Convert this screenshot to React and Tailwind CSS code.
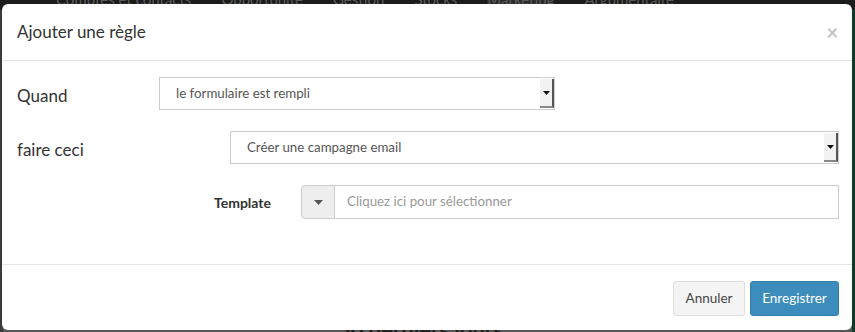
import { useState } from "react"

const font = { fontFamily: '"Source Sans Pro", Lato, "Liberation Sans", sans-serif' }

function Select({ value, className }) {
  return (
    <div className={`flex h-[33px] items-stretch border border-[#ccc] bg-white ${className}`}>
      <div className="flex flex-1 items-center pl-[16px] text-[13.3px] text-[#555]">{value}</div>
      <div className="my-[1px] mr-0 flex w-[14px] items-center justify-center border-r-2 border-b-2 border-r-[#555] border-b-[#888] bg-[#f2f2f2]">
        <svg width="7" height="4" viewBox="0 0 7 4"><path d="M0 0h7L3.5 4z" fill="#111" /></svg>
      </div>
    </div>
  )
}

export default function App() {
  const [template, setTemplate] = useState("")
  const nav = ["Comptes et contacts", "Opportunité", "Gestion", "Stocks", "Marketing", "Argumentaire"]
  return (
    <div className="relative h-[332px] w-[855px] overflow-hidden bg-[#575757]" style={font}>
      {/* page behind the backdrop */}
      <div className="flex h-[10px] items-end gap-[30px] overflow-hidden bg-[#1c1c1c] pl-[56px] text-[15px] leading-[22px] text-[#5a5a5a]">
        {nav.map((n, i) => (
          <span key={i} className={`shrink-0 ${n === "Marketing" ? "bg-[#2b2b2b]" : ""}`}>{n}</span>
        ))}
      </div>
      <div className="flex h-[322px]">
        <div className="w-[3px] bg-[#3a3a3a]"></div>
        <div className="flex-1"></div>
        <div className="w-[3px] bg-[#0f3a28]"></div>
      </div>
      <div className="absolute bottom-[-14px] left-[338px] text-[22px] font-bold text-[#1e1e1e]">30 derniers jours</div>

      {/* modal */}
      <div className="absolute left-[2px] top-[4px] flex h-[326px] w-[850px] flex-col rounded-[6px] bg-white text-[#333]">
        <div className="flex h-[57px] items-center justify-between border-b border-[#e5e5e5] pl-[15px] pr-[14px]">
          <h4 className="text-[17px]">Ajouter une règle</h4>
          <span className="text-[20px] font-bold leading-none text-[#c4c4c4]">×</span>
        </div>
        <div className="flex flex-1 flex-col border-b border-[#e5e5e5] pt-[16px]">
          <div className="flex items-center">
            <label className="w-[157px] pl-[15px] pt-[5px] text-[17px]">Quand</label>
            <Select value="le formulaire est rempli" className="w-[396px]" />
          </div>
          <div className="mt-[21px] flex items-center">
            <label className="w-[228px] pl-[15px] pt-[5px] text-[17px]">faire ceci</label>
            <Select value="Créer une campagne email" className="w-[609px]" />
          </div>
          <div className="mt-[21px] flex items-center">
            <label className="w-[299px] pl-[212px] text-[14px] font-bold">Template</label>
            <div className="flex h-[34px] w-[538px]">
              <div className="flex w-[34px] items-center justify-center rounded-l-[4px] border border-[#ccc] bg-[#eee]">
                <svg width="9" height="5" viewBox="0 0 9 5"><path d="M0 0h9L4.5 5z" fill="#555" /></svg>
              </div>
              <input
                value={template}
                onChange={(e) => setTemplate(e.target.value)}
                placeholder="Cliquez ici pour sélectionner"
                className="flex-1 border border-l-0 border-[#ccc] pl-[12px] text-[13.3px] text-[#555] outline-none placeholder:text-[#999]"
                style={font}
              />
            </div>
          </div>
        </div>
        <div className="flex h-[65px] items-center justify-end gap-[5px] pr-[13px] pt-[1px]">
          <button className="h-[35px] w-[72px] rounded-[3px] border border-[#ddd] bg-[#f4f4f4] text-[13.5px] text-[#444]">Annuler</button>
          <button className="h-[35px] w-[89px] rounded-[3px] border border-[#367fa9] bg-[#3c8dbc] text-[13.5px] text-white">Enregistrer</button>
        </div>
      </div>
    </div>
  )
}
